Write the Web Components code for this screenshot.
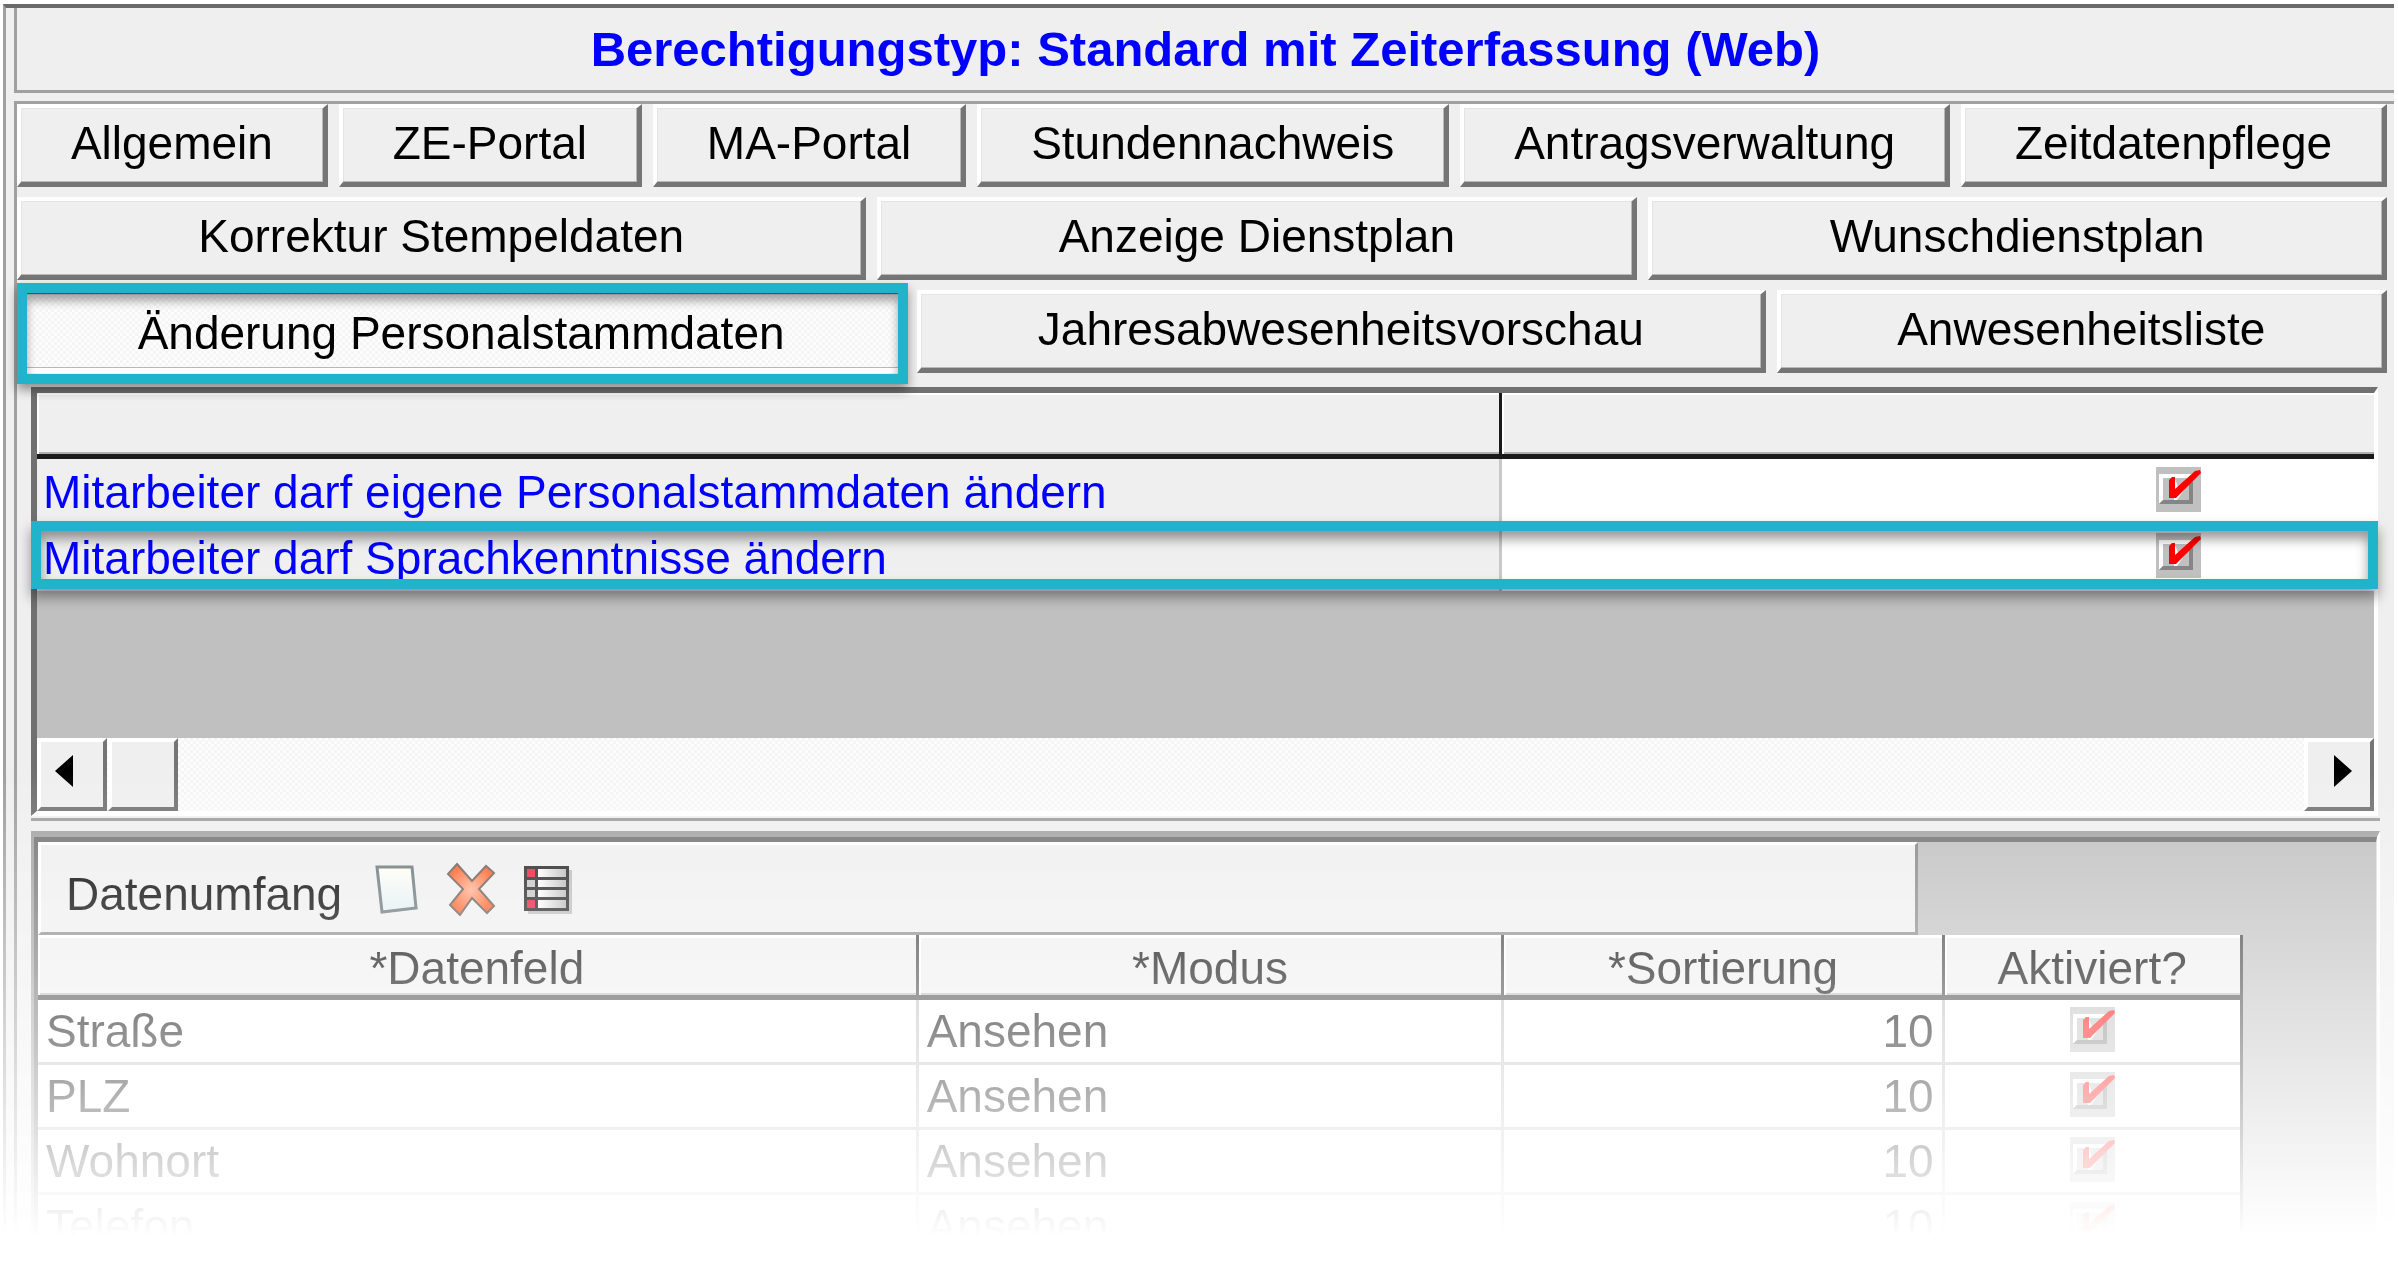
<!DOCTYPE html>
<html lang="de">
<head>
<meta charset="utf-8">
<title>Berechtigungstyp</title>
<style>
	body {
		margin: 0;
		background: #fff;
		color: #000;
		font-family: "Liberation Sans", Arial, sans-serif;
		font-size: 46px;
		line-height: 52px;
		--face: #efefef;
		--line: #a0a0a0;
		--shade: #757575;
		--mark: #1fb4c9;
		--dither: repeating-conic-gradient(#f5f5f5 0 25%, #fdfdfd 0 50%) 0 0 / 6px 6px;
	}
</style>
</head>
<body>

<app-window>
	<title-bar>Berechtigungstyp: Standard mit Zeiterfassung (Web)</title-bar>
	<tab-panel>
		<tab-row slot="tabs">
			<tab-button>Allgemein</tab-button>
			<tab-button>ZE-Portal</tab-button>
			<tab-button>MA-Portal</tab-button>
			<tab-button>Stundennachweis</tab-button>
			<tab-button>Antragsverwaltung</tab-button>
			<tab-button>Zeitdatenpflege</tab-button>
		</tab-row>
		<tab-row slot="tabs">
			<tab-button>Korrektur Stempeldaten</tab-button>
			<tab-button>Anzeige Dienstplan</tab-button>
			<tab-button>Wunschdienstplan</tab-button>
		</tab-row>
		<tab-row slot="tabs">
			<tab-button active>Änderung Personalstammdaten</tab-button>
			<tab-button>Jahresabwesenheitsvorschau</tab-button>
			<tab-button>Anwesenheitsliste</tab-button>
		</tab-row>
		<rights-grid></rights-grid>
		<data-grid caption="Datenumfang"></data-grid>
	</tab-panel>
</app-window>

<script>
var Data = {
	Rights: [
		{label: "Mitarbeiter darf eigene Personalstammdaten ändern", marked: false},
		{label: "Mitarbeiter darf Sprachkenntnisse ändern", marked: true}
	],
	Fields: [
		{name: "Straße", mode: "Ansehen", sort: 10},
		{name: "PLZ", mode: "Ansehen", sort: 10},
		{name: "Wohnort", mode: "Ansehen", sort: 10},
		{name: "Telefon", mode: "Ansehen", sort: 10}
	]
};

class AppWindow extends HTMLElement {

	constructor(){
		super();
		this.attachShadow({mode: "open"});
	}

	connectedCallback(){
		// the lower part of the window fades out to the page
		this.shadowRoot.innerHTML = `
			<style>
				:host {
					display: block;
					margin: 4px 4px 0 3px;
					padding-left: 8px;
					border-top: 4px solid #6a6a6a;
					border-left: 3px solid var(--line);
					background: var(--face);
					-webkit-mask-image: linear-gradient(#000 calc(100% - 489px), transparent calc(100% - 24px));
					mask-image: linear-gradient(#000 calc(100% - 489px), transparent calc(100% - 24px));
				}
			</style>
			<slot></slot>
		`;
	}

}

class TitleBar extends HTMLElement {

	constructor(){
		super();
		this.attachShadow({mode: "open"});
	}

	connectedCallback(){
		this.shadowRoot.innerHTML = `
			<style>
				:host {
					display: block;
					margin-bottom: 8px;
					padding: 15px 0;
					border-left: 3px solid var(--line);
					border-bottom: 3px solid var(--line);
				}
				h1 {
					margin: 0;
					color: #00f;
					font-size: 49px;
					text-align: center;
				}
			</style>
			<h1><slot></slot></h1>
		`;
	}

}

class TabPanel extends HTMLElement {

	constructor(){
		super();
		this.attachShadow({mode: "open"});
	}

	connectedCallback(){
		this.shadowRoot.innerHTML = `
			<style>
				:host {
					display: block;
					border-top: 3px solid var(--line);
					border-left: 3px solid var(--line);
				}
				nav {
					display: flex;
					flex-direction: column;
					gap: 10px;
					padding-right: 7px;
				}
				#content {
					margin: 14px 14px 0 14px;
				}
			</style>
			<nav><slot name="tabs"></slot></nav>
			<div id="content"><slot></slot></div>
		`;
	}

}

class TabRow extends HTMLElement {

	constructor(){
		super();
		this.attachShadow({mode: "open"});
	}

	connectedCallback(){
		this.shadowRoot.innerHTML = `
			<style>
				:host {
					display: flex;
					gap: 11px;
				}
			</style>
			<slot></slot>
		`;
	}

}

class TabButton extends HTMLElement {

	constructor(){
		super();
		this.attachShadow({mode: "open"});
	}

	connectedCallback(){
		this.shadowRoot.innerHTML = `
			<style>
				:host {
					display: block;
					position: relative;
					flex: 1 1 auto;
				}
				button {
					display: block;
					width: 100%;
					height: 83px;
					margin: 0;
					padding: 0 0 4px;
					border: solid;
					border-width: 4px 5px 5px 4px;
					border-color: #fff var(--shade) var(--shade) #fff;
					box-shadow: inset -1px -1px #b8b8b8, inset 1px 1px #e4e4e4;
					background: var(--face);
					color: inherit;
					font: inherit;
					white-space: nowrap;
				}
				:host([active]) {
					z-index: 1;
				}
				:host([active]) button {
					padding: 4px 0 0;
					border-color: var(--shade) #fff #fff var(--shade);
					background: var(--dither);
				}
				:host([active])::after {
					content: "";
					position: absolute;
					inset: -7px -2px -11px 0;
					border: 10px solid var(--mark);
					box-shadow: 0 6px 10px rgba(0, 0, 0, .4), inset 0 8px 10px rgba(0, 0, 0, .35);
					pointer-events: none;
				}
			</style>
			<button type="button"><slot></slot></button>
		`;
	}

}

class TickBox extends HTMLElement {

	constructor(){
		super();
		this.attachShadow({mode: "open"});
	}

	connectedCallback(){
		const label = this.getAttribute("label");
		this.shadowRoot.innerHTML = `
			<style>
				:host {
					display: inline-grid;
					width: 45px;
					height: 45px;
					vertical-align: top;
				}
				input, svg {
					grid-area: 1 / 1;
					width: 45px;
					height: 45px;
					margin: 0;
				}
				input {
					appearance: none;
					background: #c0c0c0;
				}
				svg {
					pointer-events: none;
				}
				input:not(:checked) + svg .tick {
					display: none;
				}
			</style>
			<input type="checkbox" aria-label="${label}" checked>
			<svg viewBox="0 0 45 45">
				<path d="M3 37V7h34l-4 4H7v22z" fill="#fff"/>
				<path d="M3 37h34V9l-4 3v21H7z" fill="#858585"/>
				<g class="tick">
					<path d="M19 12l3 8L38 9 21 33h-3z" fill="#fff"/>
					<path d="M13 13l3-3h3v12L39 4l5-1 1 3-25 25h-7z" fill="#f00"/>
				</g>
			</svg>
		`;
	}

}

class ScrollStrip extends HTMLElement {

	constructor(){
		super();
		this.attachShadow({mode: "open"});
	}

	connectedCallback(){
		this.shadowRoot.innerHTML = `
			<style>
				:host {
					display: flex;
					justify-content: space-between;
					height: 73px;
					background: var(--dither);
				}
				div {
					display: flex;
					gap: 1px;
				}
				button, .thumb {
					display: flex;
					align-items: center;
					justify-content: center;
					box-sizing: border-box;
					width: 70px;
					margin: 0;
					padding: 0 0 8px;
					border: solid;
					border-width: 4px;
					border-color: #fff var(--shade) var(--shade) #fff;
					background: var(--face);
				}
				.left {
					padding-right: 16px;
				}
				.right {
					padding-left: 8px;
				}
			</style>
			<div>
				<button type="button" class="left" aria-label="Nach links">
					<svg width="18" height="32" viewBox="0 0 18 32"><path d="M18 0v32L0 16z"/></svg>
				</button>
				<span class="thumb"></span>
			</div>
			<button type="button" class="right" aria-label="Nach rechts">
				<svg width="18" height="32" viewBox="0 0 18 32"><path d="M0 0v32l18-16z"/></svg>
			</button>
		`;
	}

}

class RightsGrid extends HTMLElement {

	constructor(){
		super();
		this.attachShadow({mode: "open"});
	}

	connectedCallback(){
		var rows = "";
		for(var i = 0; i < Data.Rights.length; i++){
			var right = Data.Rights[i];
			rows += `
				<tr class="${right.marked ? "marked" : ""}">
					<th scope="row">${right.label}</th>
					<td><tick-box label="${right.label}"></tick-box></td>
				</tr>
			`;
		}

		this.shadowRoot.innerHTML = `
			<style>
				:host {
					display: block;
					padding-bottom: 2px;
					border-bottom: 3px solid var(--line);
				}
				#frame {
					margin-right: 2px;
					border: solid;
					border-width: 6px 4px 5px 6px;
					border-color: #707070 #fff #fff #707070;
					background: #c0c0c0;
				}
				table {
					width: 100%;
					margin-bottom: 147px;
					border-spacing: 0;
					table-layout: fixed;
				}
				col:first-child {
					width: 62.7%;
				}
				th, td {
					box-sizing: border-box;
					height: 66px;
					padding: 0;
				}
				thead td {
					border-bottom: 5px solid #1a1a1a;
					background: var(--face);
					box-shadow: inset 2px 2px #fff, inset 0 -2px #b0b0b0;
				}
				thead td:first-child {
					border-right: 3px solid #1a1a1a;
				}
				tbody th {
					padding-left: 6px;
					border-right: 3px solid #c8c8c8;
					background: var(--face);
					color: #00f;
					font-weight: normal;
					text-align: left;
					white-space: nowrap;
				}
				tbody td {
					padding: 0 173px 6px 0;
					background: #fff;
					text-align: right;
					line-height: 0;
				}
				.marked {
					position: relative;
				}
				/* sits in the last cell, but is laid out against the whole row */
				.marked td::after {
					content: "";
					position: absolute;
					inset: -4px -4px 2px -6px;
					border: 10px solid var(--mark);
					box-shadow: 0 8px 12px rgba(0, 0, 0, .4), inset 0 8px 12px rgba(0, 0, 0, .4);
					pointer-events: none;
				}
			</style>
			<div id="frame">
				<table>
					<colgroup><col><col></colgroup>
					<thead><tr><td></td><td></td></tr></thead>
					<tbody>${rows}</tbody>
				</table>
				<scroll-strip></scroll-strip>
			</div>
		`;
	}

}

class DataGrid extends HTMLElement {

	constructor(){
		super();
		this.attachShadow({mode: "open"});
	}

	connectedCallback(){
		const caption = this.getAttribute("caption");

		var rows = "";
		for(var i = 0; i < Data.Fields.length; i++){
			var field = Data.Fields[i];
			rows += `
				<tr>
					<td>${field.name}</td>
					<td>${field.mode}</td>
					<td class="number">${field.sort}</td>
					<td class="tick"><tick-box label="${field.name} aktiviert"></tick-box></td>
				</tr>
			`;
		}

		this.shadowRoot.innerHTML = `
			<style>
				:host {
					display: block;
					margin-top: 10px;
					border: solid;
					border-width: 6px 3px 0 3px;
					border-color: #a3a3a3 #fff #fff #a3a3a3;
				}
				#frame {
					border: solid;
					border-width: 5px 1px 0 4px;
					border-color: #747474 #e0e0e0 #fff #747474;
					background: #c0c0c0;
				}
				#toolbar {
					display: flex;
					align-items: center;
					box-sizing: border-box;
					width: 80.4%;
					height: 93px;
					padding-left: 25px;
					border: solid;
					border-width: 3px;
					border-color: #fff #888 #888 #fff;
					background: var(--face);
				}
				#toolbar span {
					margin: 10px 26px 0 0;
				}
				#toolbar button {
					display: block;
					width: 54px;
					height: 54px;
					margin: 0 22px 0 0;
					padding: 0;
					border: 0;
					background: none;
				}
				table {
					width: 94.3%;
					border-spacing: 0;
					border-right: 3px solid #404040;
					table-layout: fixed;
				}
				th, td {
					box-sizing: border-box;
					height: 65px;
					padding: 0 8px;
				}
				th {
					padding: 6px 0 0;
					border-right: 3px solid #404040;
					border-bottom: 5px solid #404040;
					box-shadow: inset 2px 3px #fff, inset 0 -2px #bbb;
					background: var(--face);
					font-weight: normal;
				}
				td {
					border-right: 3px solid #c0c0c0;
					border-bottom: 3px solid #c0c0c0;
					background: #fff;
					white-space: nowrap;
				}
				th:last-child, td:last-child {
					border-right: 0;
				}
				.number {
					text-align: right;
				}
				.tick {
					padding-bottom: 4px;
					text-align: center;
					line-height: 0;
				}
			</style>
			<div id="frame">
				<div id="toolbar">
					<span>${caption}</span>
					<button type="button" aria-label="Neu">
						<svg width="54" height="54" viewBox="0 0 54 54">
							<defs>
								<linearGradient id="paper" x1="0" y1="0" x2="0" y2="1">
									<stop offset="0" stop-color="#fffff4"/>
									<stop offset="1" stop-color="#dfedf4"/>
								</linearGradient>
							</defs>
							<path d="M14 51l36-4-3-6z" fill="#aaa"/>
							<path d="M9 5h35l4 41-34 4z" fill="url(#paper)" stroke="#697478" stroke-width="3"/>
						</svg>
					</button>
					<button type="button" aria-label="Löschen">
						<svg width="54" height="54" viewBox="0 0 54 54">
							<defs>
								<radialGradient id="cross">
									<stop offset="0" stop-color="#ffb294"/>
									<stop offset="1" stop-color="#ff5d22"/>
								</radialGradient>
							</defs>
							<path d="M13 2l15 17L42 4l8 7-15 16 15 17-7 7-15-15-12 17-10-10 13-16L4 12z" fill="url(#cross)" stroke="#6a5a54" stroke-width="2"/>
						</svg>
					</button>
					<button type="button" aria-label="Liste">
						<svg width="54" height="54" viewBox="0 0 54 54">
							<defs>
								<linearGradient id="row">
									<stop offset="0" stop-color="#fff"/>
									<stop offset="1" stop-color="#b8b8b8"/>
								</linearGradient>
							</defs>
							<path d="M8 8h44v44H8z" fill="#bbb"/>
							<path d="M4 4h45v45H4z" fill="#222"/>
							<path d="M7 7h8v8H7zM7 38h8v8H7z" fill="#f01838"/>
							<path d="M7 18h8v7H7zM7 28h8v7H7z" fill="#c4c4c4"/>
							<path d="M18 7h28v8H18zM18 18h28v7H18zM18 28h28v7H18zM18 38h28v8H18z" fill="url(#row)"/>
						</svg>
					</button>
				</div>
				<table>
					<colgroup>
						<col style="width: 40%">
						<col style="width: 26.6%">
						<col style="width: 20%">
						<col style="width: 13.4%">
					</colgroup>
					<thead>
						<tr>
							<th>*Datenfeld</th>
							<th>*Modus</th>
							<th>*Sortierung</th>
							<th>Aktiviert?</th>
						</tr>
					</thead>
					<tbody>${rows}</tbody>
				</table>
			</div>
		`;
	}

}

customElements.define('app-window', AppWindow);
customElements.define('title-bar', TitleBar);
customElements.define('tab-panel', TabPanel);
customElements.define('tab-row', TabRow);
customElements.define('tab-button', TabButton);
customElements.define('tick-box', TickBox);
customElements.define('scroll-strip', ScrollStrip);
customElements.define('rights-grid', RightsGrid);
customElements.define('data-grid', DataGrid);
</script>
</body>
</html>
